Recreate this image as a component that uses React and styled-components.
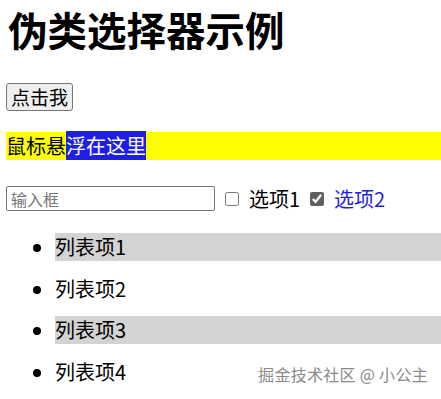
import React from 'react'
import styled, { createGlobalStyle } from 'styled-components'

const GlobalStyle = createGlobalStyle`
  body {
    margin: 0;
    background: #fff;
    font-family: 'Noto Sans CJK SC', 'Noto Sans', sans-serif;
    color: #000;
  }
`

const Page = styled.div`
  position: relative;
  width: 441px;
  height: 399px;
  padding: 0 6px;
  box-sizing: border-box;
  overflow: hidden;
`

const Title = styled.h1`
  margin: 0 0 0 2px;
  font-size: 39.5px;
  line-height: normal;
  font-weight: 700;
`

const Button = styled.button`
  display: block;
  margin-top: 26px;
  height: 28px;
  width: 67px;
  padding: 0;
  font-family: inherit;
  font-size: 19px;
  line-height: 26px;
  color: #000;
  background: #efefef;
  border: 1px solid #767676;
  border-radius: 3px;
`

const HoverLine = styled.p`
  margin: 21px -6px 0 0;
  background: #ffff00;
  font-size: 20px;
  line-height: 28px;
  height: 28px;
`

const Selected = styled.span`
  background: #1d1ee6;
  color: #fff;
`

const FormRow = styled.div`
  display: flex;
  align-items: center;
  margin-top: 26px;
  height: 25px;
`

const TextInput = styled.input`
  width: 209px;
  height: 25px;
  box-sizing: border-box;
  padding: 0 4px;
  border: 1px solid #767676;
  border-radius: 2px;
  font-family: inherit;
  font-size: 16px;
  &::placeholder {
    color: #767676;
  }
`

const Check = styled.input`
  width: 14px;
  height: 14px;
  margin: 0 10px 0 ${({ $gap }) => $gap}px;
  accent-color: #5f5f5f;
`

const Label = styled.label`
  font-size: 20px;
  line-height: 25px;
  color: ${({ $active }) => ($active ? '#1f1fe0' : '#000')};
`

const List = styled.ul`
  margin: 22px 0 0;
  padding-left: 49px;
`

const Item = styled.li`
  font-size: 20px;
  line-height: 28px;
  height: 28px;
  margin-bottom: 13.5px;
  margin-right: -6px;
  background: ${({ $odd }) => ($odd ? '#d3d3d3' : 'transparent')};
`

const Watermark = styled.div`
  position: absolute;
  right: 13px;
  bottom: 13px;
  font-size: 16px;
  color: #8a8a8a;
  text-shadow: 0 0 1px #fff, 0 0 2px #fff;
  letter-spacing: 0.3px;
`

const items = ['列表项1', '列表项2', '列表项3', '列表项4']

export default function App() {
  return (
    <Page>
      <GlobalStyle />
      <Title>伪类选择器示例</Title>
      <Button>点击我</Button>
      <HoverLine>
        鼠标悬<Selected>浮在这里</Selected>
      </HoverLine>
      <FormRow>
        <TextInput placeholder="输入框" />
        <Check type="checkbox" id="o1" $gap={10} />
        <Label htmlFor="o1">选项1</Label>
        <Check type="checkbox" id="o2" defaultChecked $gap={10} />
        <Label htmlFor="o2" $active>
          选项2
        </Label>
      </FormRow>
      <List>
        {items.map((t, i) => (
          <Item key={t} $odd={i % 2 === 0}>
            {t}
          </Item>
        ))}
      </List>
      <Watermark>掘金技术社区 @ 小公主</Watermark>
    </Page>
  )
}
